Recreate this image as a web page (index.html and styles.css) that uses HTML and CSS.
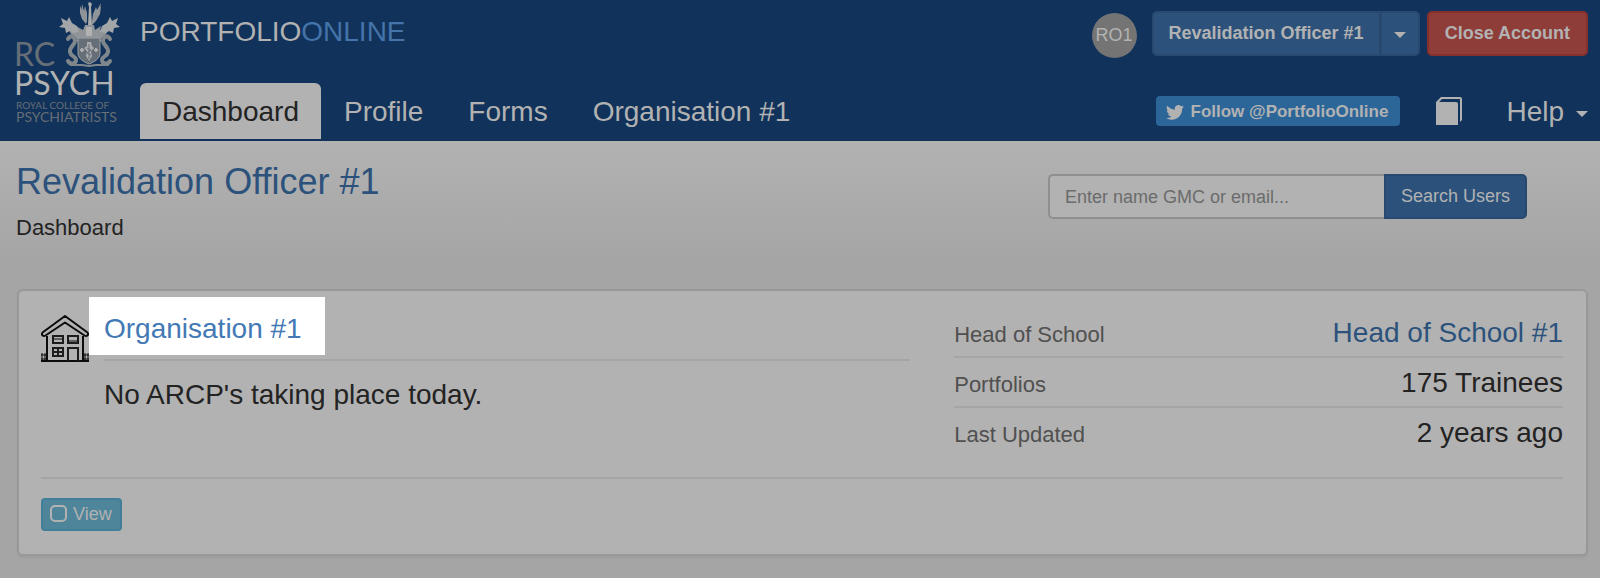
FILE: index.html
```html
<!DOCTYPE html>
<html lang="en">
<head>
<meta charset="utf-8">
<title>Portfolio Online</title>
<link rel="stylesheet" href="styles.css">
</head>
<body>
<header class="site-header">
  <a class="logo" href="#" aria-label="Royal College of Psychiatrists">
    <svg width="120" height="128" viewBox="0 0 120 128">
      <g fill="#666e77" class="logo-text">
        <text x="14" y="66" font-size="32" class="logo-heavy">RC</text>
        <text x="14" y="95" font-size="32" class="logo-strong">PSYCH</text>
        <text x="16" y="109" font-size="10">ROYAL COLLEGE OF</text>
        <text x="16" y="122" font-size="14">PSYCHIATRISTS</text>
      </g>
      <g fill="#8f9499">
        <path d="M88 3l2-1 2 2-1 3 1 18h-4l1-18z" fill="#a9abad"/>
        <path d="M87 22c-5-4-6-10-5-18l2 7 1-5 2 7zM92 22c4-4 8-10 9-19l-4 7-1-3-3 7z"/>
        <path d="M84 14l-4-8 0 7 2 6 4 5 1-3zM96 13l5-7-1 8-4 7-4 4v-4z"/>
        <path d="M85 25h9l1 5 6-4-1 4 5-2-1 4 4-2-3 6-5 3 4 2-9 1-4-4h-4l-5 4-8-1 4-2-6-3-3-6 4 2-1-4 5 2-1-4 7 4z"/>
        <path d="M61 18l6 3 2-4 3 6 5 3 2 6-6 1-3-2-4 2-1-5-6-1 4-3zM118 18l-6 3-2-4-3 6-5 3-2 6 6 1 3-2 4 2 1-5 6-1-4-3z" fill="#a3a6a8"/>
        <path d="M86 27h6v9h-6z" fill="#b2b2b2"/>
      </g>
      <g fill="none" stroke="#7f868c" stroke-width="4" stroke-linecap="round">
        <path d="M68 39c3-5 7-2 7 2s-6 6-5 11 6 4 6 8-6 5-8 1"/>
        <path d="M110 39c-3-5-7-2-7 2s6 6 5 11-6 4-6 8 6 5 8 1"/>
        <path d="M71 65h11l7 1 7-1h12" stroke-width="2"/>
      </g>
      <path d="M78 38h22v15c0 6-6 9-11 11-5-2-11-5-11-11z" fill="#666e77" stroke="#9b9fa3"/>
      <path d="M87 42h4l1 4 2 2-3 3 1 5-3 5-3-5 1-5-3-3 3-2z" fill="#a9abad"/>
      <path d="M80 50h4m-2-2v4M94 50h4m-2-2v4" stroke="#a9abad" stroke-width="2"/>
      <path d="M89 44v15M87 48l4 2-4 3 4 2" stroke="#666e77" fill="none"/>
    </svg>
  </a>
  <div class="header-main">
    <div class="header-row header-top">
      <div class="brand">PORTFOLIO<span class="brand-accent">ONLINE</span></div>
      <div class="account">
        <span class="avatar">RO1</span>
        <div class="split">
          <button class="btn btn-role" type="button">Revalidation Officer #1</button>
          <button class="btn btn-toggle" type="button" aria-label="Switch role"><span class="caret"></span></button>
        </div>
        <button class="btn btn-close" type="button">Close Account</button>
      </div>
    </div>
    <div class="header-row header-bottom">
      <nav class="tabs">
        <a class="tab tab-active" href="#">Dashboard</a>
        <a class="tab" href="#">Profile</a>
        <a class="tab" href="#">Forms</a>
        <a class="tab" href="#">Organisation #1</a>
      </nav>
      <div class="tools">
        <a class="follow" href="#">
          <svg width="18" height="15" viewBox="0 0 24 20" fill="currentColor"><path d="M24 2.4a10 10 0 0 1-2.8.8A5 5 0 0 0 23.300.5a10 10 0 0 1-3.100 1.200A4.900 4.900 0 0 0 11.800 6.200 14 14 0 0 1 1.700 1.100a4.900 4.900 0 0 0 1.500 6.500 5 5 0 0 1-2.200-.6c0 2.300 1.600 4.400 3.900 4.900a5 5 0 0 1-2.200.1 4.900 4.900 0 0 0 4.600 3.400A9.900 9.900 0 0 1 0 17.400 14 14 0 0 0 7.500 19.600c9.100 0 14.300-7.700 14-14.600A10 10 0 0 0 24 2.400z"/></svg>
          Follow @PortfolioOnline</a>
        <a class="book" href="#" aria-label="Documents">
          <svg width="26" height="28" viewBox="0 0 26 28"><path d="M0 28V5l5-5h19a2 2 0 0 1 2 2v21l-2 2V2H6L3 5h17a2 2 0 0 1 2 2V28z" fill="currentColor"/></svg>
        </a>
        <a class="help" href="#">Help<span class="caret"></span></a>
      </div>
    </div>
  </div>
</header>
<main>
  <section class="page-head">
    <div>
      <h1>Revalidation Officer #1</h1>
      <p class="crumb">Dashboard</p>
    </div>
    <form class="search">
      <input class="search-input" type="text" placeholder="Enter name GMC or email..." aria-label="Search users">
      <button class="search-btn" type="button">Search Users</button>
    </form>
  </section>
  <section class="card">
    <div class="card-body">
      <div class="org">
        <svg class="house" width="48" height="48" viewBox="0 0 48 48" fill="none" stroke="#0b0b0b" stroke-width="2">
          <path d="M24 1L1.500 17.500c-1.500 2 .5 4.500 3 3L24 7.500l19.500 13c2.500 1.500 4.500-1 3-3z" stroke-linejoin="round"/>
          <path d="M6 21v25M42 21v25M0 46h48"/>
          <path d="M12 21h10v7H12zM27 21h10v7H27zM12 33h10v8H12zM17 33v8M12 37h10M27 46V33h10v13" stroke="#1c1c1c"/>
          <path d="M12 24h10M27 26h10" stroke-width="1"/>
          <path d="M1 38v8M4 38v8M0 40h5M0 44h5M44 38v8M47 38v8M43 40h5M43 44h5" stroke-width="1"/>
        </svg>
        <div class="org-main">
          <h2 class="org-title"><a href="#">Organisation #1</a></h2>
          <p class="org-note">No ARCP's taking place today.</p>
        </div>
      </div>
      <dl class="facts">
        <div class="fact"><dt>Head of School</dt><dd><a href="#">Head of School #1</a></dd></div>
        <div class="fact"><dt>Portfolios</dt><dd>175 Trainees</dd></div>
        <div class="fact"><dt>Last Updated</dt><dd>2 years ago</dd></div>
      </dl>
    </div>
    <div class="card-foot">
      <button class="view" type="button"><svg width="17" height="17" viewBox="0 0 17 17" fill="none" stroke="currentColor" stroke-width="2"><rect x="1" y="1" width="15" height="15" rx="4"/></svg>View</button>
    </div>
  </section>
</main>
</body>
</html>
```
FILE: styles.css
```css
* { box-sizing: border-box; }
body {
  margin: 0;
  min-height: 100vh;
  background: #a5a5a5;
  color: #232323;
  font-family: "Liberation Sans", Arial, sans-serif;
  font-size: 28px;
  line-height: 40px;
}
a { color: #2c527c; text-decoration: none; }
h1, h2, p, dl, dd { margin: 0; font-weight: 400; }
button, input { font: inherit; margin: 0; }
button { cursor: pointer; }

.site-header {
  display: flex;
  padding-right: 12px;
  background: #11325a;
  color: #b2b2b2;
}
.site-header a { color: inherit; }
.logo { flex: 0 0 140px; }
.logo svg { display: block; }
.logo-text { font-family: Lato, sans-serif; }
.logo-strong { fill: #b2b2b2; }
.header-main { flex: 1; display: flex; flex-direction: column; gap: 25px; }
.header-row { display: flex; justify-content: space-between; }
.header-top { padding-top: 11px; }
.brand { line-height: 42px; }
.brand-accent { color: #4474a9; }
.account { display: flex; gap: 7px; font-size: 18px; line-height: 22px; }
.avatar {
  width: 45px;
  height: 45px;
  margin: 2px 8px 0 0;
  border-radius: 50%;
  background: #747474;
  line-height: 44px;
  text-align: center;
}
.split { display: flex; }
.btn {
  height: 45px;
  padding: 0 15px 2px;
  border: 2px solid #27486f;
  border-radius: 5px;
  background: #2c527c;
  color: #b2b2b2;
  font-weight: 700;
}
.btn-role { border-radius: 5px 0 0 5px; }
.btn-toggle { width: 40px; padding: 0; margin-left: -1px; border-radius: 0 5px 5px 0; }
.btn-close { padding: 0 16px 2px; background: #8f3d39; border-color: #86302c; }
.caret {
  display: inline-block;
  border: 6px solid transparent;
  border-top-color: currentColor;
  border-bottom: 0;
  vertical-align: middle;
}
.tabs { display: flex; gap: 1px; }
.tab { height: 56px; margin-bottom: 2px; padding: 1px 22px 0; line-height: 56px; }
.site-header .tab-active { background: #b2b2b2; color: #232323; border-radius: 6px 6px 0 0; }
.tools { display: flex; align-items: center; height: 56px; }
.follow {
  display: flex;
  align-items: center;
  gap: 7px;
  height: 30px;
  padding: 2px 12px 0 10px;
  border-radius: 4px;
  background: #2c6699;
  font-size: 17px;
  font-weight: 700;
}
.book { display: flex; margin: 0 44px 0 36px; }
.help { display: flex; align-items: center; gap: 12px; padding-top: 2px; }
.help .caret { margin-top: 4px; }

.page-head {
  display: flex;
  justify-content: space-between;
  padding: 19px 73px 46px 16px;
  background: linear-gradient(#b2b2b2, #a5a5a5 120px);
}
h1 { color: #2c527c; font-size: 36px; line-height: 44px; }
.crumb { margin-top: 9px; font-size: 22px; line-height: 30px; }
.search { display: flex; width: 479px; margin-top: 14px; height: 45px; font-size: 18px; }
.search-input {
  flex: 1;
  min-width: 0;
  padding: 0 15px;
  border: 2px solid #8f8f8f;
  border-right: 0;
  border-radius: 5px 0 0 5px;
  background: #b2b2b2;
  color: #232323;
}
.search-input::placeholder { color: #6b6b6b; opacity: 1; }
.search-btn {
  padding: 0 15px 2px;
  border: 2px solid #27486f;
  border-radius: 0 5px 5px 0;
  background: #2c527c;
  color: #b2b2b2;
}
.card {
  margin: 0 12px 20px 17px;
  padding: 6px 23px 23px 22px;
  border: 2px solid #989898;
  border-radius: 6px;
  background: #b2b2b2;
  box-shadow: 0 2px 2px #9c9c9c;
}
.card-body { display: flex; gap: 44px; padding-bottom: 19px; border-bottom: 2px solid #a5a5a5; }
.org { flex: 4; display: flex; }
.house { flex: none; margin-top: 18px; }
.org-main { flex: 1; }
.org-title { display: flex; padding-bottom: 4px; font-size: 28px; }
.org-title a { padding: 12px 23px 6px 15px; background: #fff; color: #4379b5; }
.org-note { margin-left: 15px; padding-top: 14px; border-top: 2px solid #a5a5a5; }
.facts { flex: 0 0 40%; padding-top: 11px; }
.fact { display: flex; justify-content: space-between; height: 50px; padding-top: 5px; border-bottom: 2px solid #a5a5a5; }
.fact:last-child { border-bottom: 0; }
.fact dt { padding-top: 2px; color: #505050; font-size: 22px; }
.card-foot { display: flex; padding-top: 19px; }
.view {
  display: flex;
  align-items: center;
  gap: 6px;
  height: 33px;
  padding: 0 8px 2px 7px;
  border: 2px solid #417f99;
  border-radius: 4px;
  background: #4f859b;
  color: #b2b2b2;
  font-size: 18px;
}
```
